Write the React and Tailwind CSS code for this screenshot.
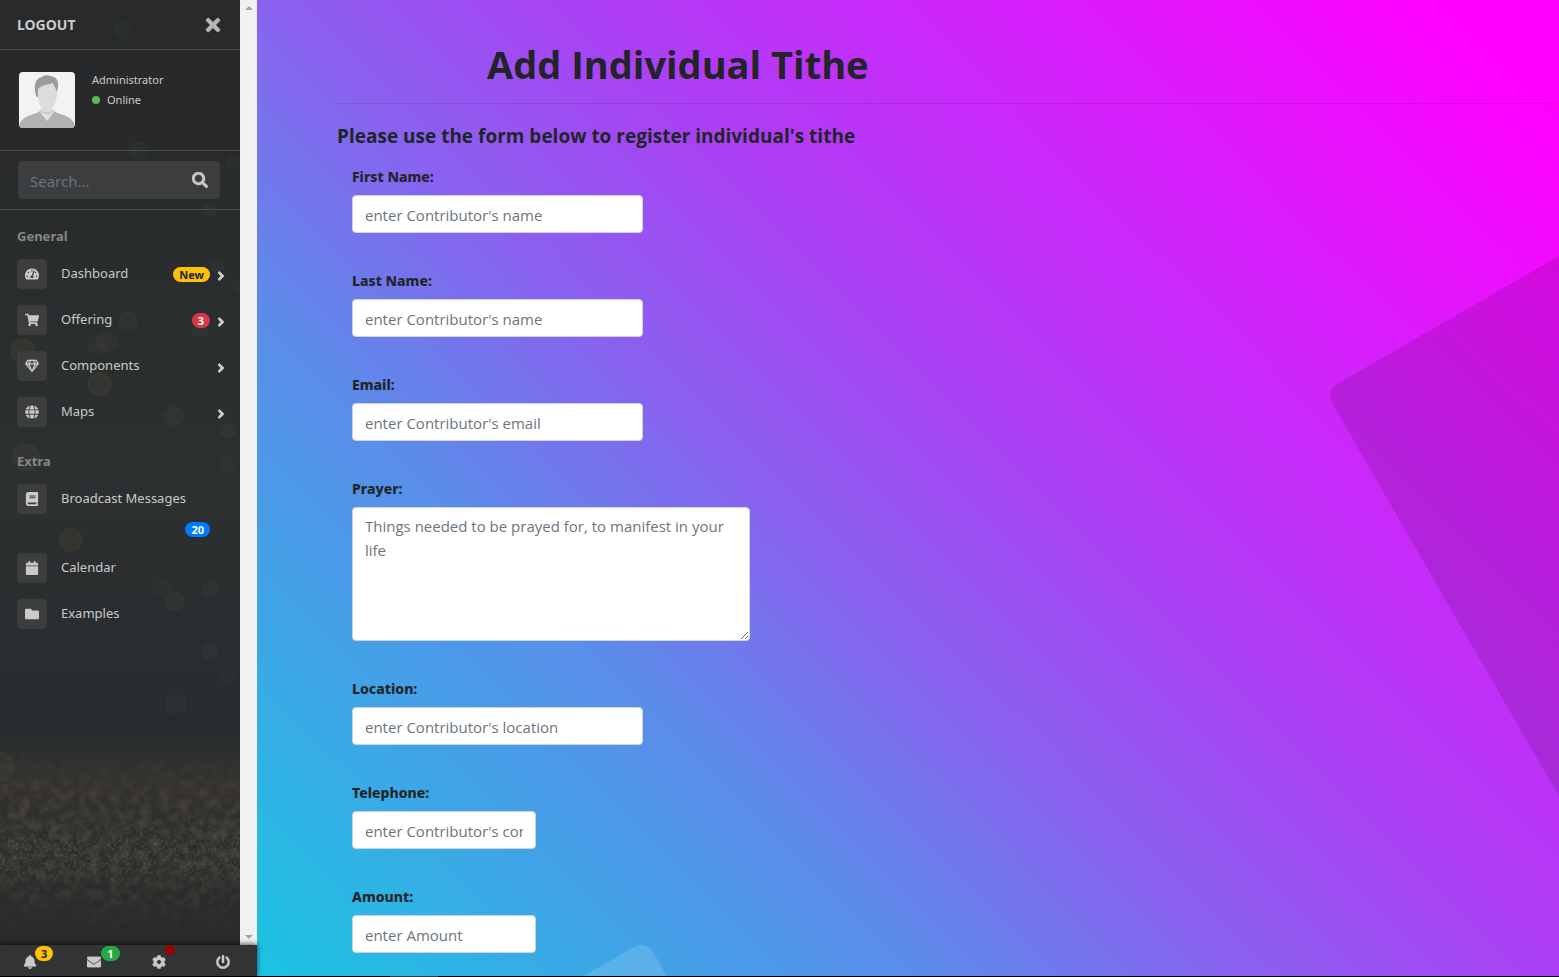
import {
  FaTachometerAlt, FaShoppingCart, FaRegGem, FaGlobe, FaBook, FaCalendar, FaFolder,
  FaBell, FaEnvelope, FaCog, FaPowerOff, FaTimes, FaSearch, FaAngleRight,
} from "react-icons/fa";

const general = [
  { label: "Dashboard", icon: FaTachometerAlt, badge: "New", tone: "bg-[#ffc107] text-[#212529]" },
  { label: "Offering", icon: FaShoppingCart, badge: "3", tone: "bg-[#dc3545] text-white" },
  { label: "Components", icon: FaRegGem, bold: true },
  { label: "Maps", icon: FaGlobe },
];

const bokeh = [
  [122, 30, 8, "#4a6a68"], [139, 151, 8, "#4f7a70"], [233, 163, 6, "#5a7468"], [210, 210, 6, "#5f7a70"],
  [23, 351, 12, "#a08a50"], [107, 342, 10, "#77704a"], [97, 345, 9, "#6a6a48"], [99, 384, 11, "#a08a45"],
  [128, 321, 9, "#6f7050"], [200, 330, 7, "#557060"], [217, 267, 6, "#5a6a60"], [238, 286, 5, "#5a7a74"],
  [174, 416, 9, "#7d7450"], [228, 431, 7, "#74785c"], [26, 457, 13, "#8a8450"], [228, 465, 7, "#55605a"],
  [71, 540, 11, "#a06f35"], [175, 601, 9, "#7a7a4c"], [210, 590, 8, "#55605a"], [162, 588, 9, "#4f5c58"],
  [210, 651, 8, "#60705c"], [227, 675, 8, "#45585c"], [176, 704, 9, "#6a8070"], [0, 767, 14, "#8a8a50"],
];

function SidebarBackdrop() {
  return (
    <svg className="absolute inset-0 h-full w-full" viewBox="0 0 240 945" preserveAspectRatio="xMidYMax slice" aria-hidden="true">
      <defs>
        <linearGradient id="night" x1="0" y1="0" x2="0" y2="1">
          <stop offset="0" stopColor="#292a2b" />
          <stop offset="0.12" stopColor="#27292a" />
          <stop offset="0.3" stopColor="#2a2d2e" />
          <stop offset="0.5" stopColor="#2c3030" />
          <stop offset="0.77" stopColor="#282c2f" />
          <stop offset="0.83" stopColor="#34322e" />
          <stop offset="0.88" stopColor="#2d2d2b" />
          <stop offset="1" stopColor="#292a2b" />
        </linearGradient>
        <linearGradient id="fade" x1="0" y1="0" x2="0" y2="1">
          <stop offset="0" stopColor="#fff" stopOpacity="0" />
          <stop offset="0.4" stopColor="#fff" stopOpacity="0.22" />
          <stop offset="0.7" stopColor="#fff" stopOpacity="0.2" />
          <stop offset="1" stopColor="#fff" stopOpacity="0" />
        </linearGradient>
        <mask id="band" maskContentUnits="objectBoundingBox"><rect width="1" height="1" fill="url(#fade)" /></mask>
        <filter id="coarse" x="0" y="0" width="100%" height="100%">
          <feTurbulence type="fractalNoise" baseFrequency="0.1" numOctaves="3" seed="4" />
          <feColorMatrix values="0 0 0 0 0.36  0 0 0 0 0.3  0 0 0 0 0.18  2 0 0 0 -0.7" />
        </filter>
        <filter id="fine" x="0" y="0" width="100%" height="100%">
          <feTurbulence type="fractalNoise" baseFrequency="0.35" numOctaves="2" seed="9" />
          <feColorMatrix values="0 0 0 0 0.38  0 0 0 0 0.4  0 0 0 0 0.35  2.4 0 0 0 -1.05" />
        </filter>
      </defs>
      <rect width="240" height="945" fill="url(#night)" />
      {bokeh.map(([x, y, r, c], i) => (
        <circle key={i} cx={x} cy={y} r={r} fill={c} fillOpacity="0.08" stroke={c} strokeOpacity="0.07" strokeWidth="2" />
      ))}
      <g mask="url(#band)"><rect y="745" width="240" height="190" filter="url(#coarse)" /></g>
      <g mask="url(#band)"><rect y="815" width="240" height="75" filter="url(#fine)" /></g>
    </svg>
  );
}

function Avatar() {
  return (
    <svg className="h-14 w-14 rounded" viewBox="0 0 56 56" role="img" aria-label="User picture">
      <rect width="56" height="56" fill="#f3f3f3" />
      <path d="M0 56C0 49 5 45 12 43c6-2 9-3 10-6h12c1 3 5 4 10 6 7 2 12 6 12 13z" fill="#b1b1b1" />
      <path d="M22 37h12l1 3-7 9-7-9z" fill="#e2e2e2" />
      <path d="M22 38q6 4 12 0l-1 3q-5 2-10 0z" fill="#c9c9c9" />
      <path d="M17 24C14 12 17 6 23 5c2-2 6-2 8-1 6 0 9 5 8 11l-2 10H18z" fill="#9b9b9b" />
      <path d="M19 17c3-4 9-4 15-6 1 3 3 6 4 9 0 8-3 19-10 19S18 28 19 17z" fill="#dcdcdc" />
    </svg>
  );
}

function Badge({ tone, children }) {
  return <span className={`rounded-full px-1.5 text-[11px] leading-[15px] font-bold ${tone}`}>{children}</span>;
}

function MenuItem({ item }) {
  const Icon = item.icon;
  return (
    <li>
      <a href="#" className="flex items-center py-2 pr-3 pl-[17px]">
        <span className="mr-3.5 flex h-[30px] w-[30px] items-center justify-center rounded bg-[#3c3d3e] text-[14px]">
          <Icon stroke="currentColor" strokeWidth={item.bold ? 10 : 0} />
        </span>
        <span className="flex-1">{item.label}</span>
        {item.badge && <Badge tone={item.tone}>{item.badge}</Badge>}
        {item.plain ? null : <FaAngleRight className="mt-1 ml-1 h-3.5 w-3.5" stroke="currentColor" strokeWidth="30" />}
      </a>
    </li>
  );
}

function FooterLink({ icon: Icon, label, children }) {
  return (
    <a href="#" aria-label={label} className="relative flex flex-1 justify-center pt-2.5 pr-1">
      <Icon className="h-3.5 w-3.5" stroke="currentColor" strokeWidth="12" />
      {children}
    </a>
  );
}

function Sidebar() {
  return (
    <aside className="relative z-10 flex w-[257px] shrink-0 flex-col font-['Noto_Sans','Open_Sans',sans-serif] text-[13px] text-[#cacaca]">
      <div className="flex min-h-0 flex-1">
        <div className="relative w-60 overflow-hidden bg-[#292b2c]">
          <SidebarBackdrop />
          <div className="relative">
            <div className="flex h-[50px] items-center justify-between border-b border-[#4b4d4e] pr-[19px] pl-[17px]">
              <a href="#" className="text-[14px] font-bold">LOGOUT</a>
              <button type="button" aria-label="Close menu" className="text-[#b8b8b8]">
                <FaTimes className="h-5 w-4" stroke="currentColor" strokeWidth="20" />
              </button>
            </div>
            <div className="flex h-[101px] gap-[17px] border-b border-[#4b4d4e] pt-[22px] pl-[19px]">
              <Avatar />
              <div className="flex flex-col text-[11px] leading-4">
                <span>Administrator</span>
                <span className="mt-1 flex items-center gap-[7px]">
                  <span className="h-2 w-2 rounded-full bg-[#5cb85c]" />Online
                </span>
              </div>
            </div>
            <form className="border-b border-[#4b4d4e] px-[18px] py-2.5" onSubmit={(e) => e.preventDefault()}>
              <div className="flex h-[38px] w-[202px] items-center rounded bg-[#3c3d3e] px-3">
                <input type="search" aria-label="Search" placeholder="Search..." className="min-w-0 flex-1 bg-transparent pt-0.5 text-[15px] outline-none placeholder:text-[#6c757d]" />
                <button type="submit" aria-label="Submit search"><FaSearch className="h-4 w-4" stroke="currentColor" strokeWidth="16" /></button>
              </div>
            </form>
            <nav aria-label="Sidebar">
              <h2 className="px-[17px] pt-4 pb-1 leading-[21px] font-bold text-[#868787]">General</h2>
              <ul>{general.map((item) => <MenuItem key={item.label} item={item} />)}</ul>
              <h2 className="px-[17px] pt-4 pb-1 leading-[21px] font-bold text-[#868787]">Extra</h2>
              <ul>
                <li>
                  <a href="#" className="flex h-[69px] flex-wrap items-start py-2 pr-[30px] pl-[17px]">
                    <span className="mr-3.5 flex h-[30px] w-[30px] items-center justify-center rounded bg-[#3c3d3e] text-[14px]"><FaBook /></span>
                    <span className="flex-1 pt-[5px] whitespace-nowrap">Broadcast Messages</span>
                    <span className="flex w-full justify-end pt-2"><Badge tone="bg-[#007bff] text-white">20</Badge></span>
                  </a>
                </li>
                <MenuItem item={{ label: "Calendar", icon: FaCalendar, plain: true }} />
                <MenuItem item={{ label: "Examples", icon: FaFolder, plain: true }} />
              </ul>
            </nav>
          </div>
        </div>
        <div className="flex w-[17px] flex-col items-center justify-between bg-[#f1f1f1] py-1.5" aria-hidden="true">
          <svg className="h-1 w-2" viewBox="0 0 8 4"><path d="M0 4 4 0l4 4z" fill="#a3a3a3" /></svg>
          <svg className="h-1 w-2" viewBox="0 0 8 4"><path d="M0 0h8L4 4z" fill="#a3a3a3" /></svg>
        </div>
      </div>
      <div className="relative flex h-[31px] bg-[#323334] shadow-[0_-1px_5px_#000000aa]">
        <FooterLink icon={FaBell} label="Notifications">
          <span className="absolute top-px left-[35px] flex"><Badge tone="bg-[#ffc107] text-[#212529]">3</Badge></span>
        </FooterLink>
        <FooterLink icon={FaEnvelope} label="Messages">
          <span className="absolute top-px left-[37px] flex"><Badge tone="bg-[#28a745] text-white">1</Badge></span>
        </FooterLink>
        <FooterLink icon={FaCog} label="Settings">
          <span className="absolute top-0 left-9 h-2.5 w-2.5 rounded-full bg-[#990000]" />
        </FooterLink>
        <FooterLink icon={FaPowerOff} label="Power" />
      </div>
    </aside>
  );
}

const fields = [
  { id: "first", label: "First Name:", hint: "enter Contributor's name", width: "w-[291px]" },
  { id: "last", label: "Last Name:", hint: "enter Contributor's name", width: "w-[291px]" },
  { id: "email", label: "Email:", hint: "enter Contributor's email", width: "w-[291px]", type: "email" },
  { id: "prayer", label: "Prayer:", hint: "Things needed to be prayed for, to manifest in your life", width: "w-[398px]", area: true },
  { id: "location", label: "Location:", hint: "enter Contributor's location", width: "w-[291px]" },
  { id: "phone", label: "Telephone:", hint: "enter Contributor's contact", width: "w-[184px]", type: "tel" },
  { id: "amount", label: "Amount:", hint: "enter Amount", width: "w-[184px]" },
];

function Field({ field }) {
  const box = "block max-w-full rounded border border-[#ced4da] bg-white px-3 text-[15px] leading-6 text-[#495057] placeholder:text-[#6c757d]";
  return (
    <div className="flex flex-col gap-2">
      <label htmlFor={field.id} className="font-['Noto_Sans','Open_Sans',sans-serif] text-[14px] leading-5 font-extrabold">{field.label}</label>
      {field.area ? (
        <textarea id={field.id} placeholder={field.hint} className={`${box} ${field.width} h-[134px] resize py-1.5`} />
      ) : (
        <input id={field.id} type={field.type || "text"} placeholder={field.hint} className={`${box} ${field.width} h-[38px] pt-0.5`} />
      )}
    </div>
  );
}

export default function App() {
  return (
    <div className="flex h-screen flex-col bg-black font-['Open_Sans','Noto_Sans',sans-serif] text-[#212529]">
      <div className="flex min-h-0 flex-1">
        <Sidebar />
        <main className="relative min-w-0 flex-1 overflow-hidden bg-[linear-gradient(45deg,#1bc4e2_0%,#5a8de9_29%,#8962ef_43%,#ab40f4_57%,#cb28fa_71%,#ff00ff_95%)]">
          <svg className="absolute inset-0 h-full w-full" viewBox="0 0 1302 976" preserveAspectRatio="xMaxYMax slice" aria-hidden="true">
            <rect width="900" height="900" rx="14" transform="translate(1068 391) rotate(-30)" fill="#000" fillOpacity="0.12" />
            <rect x="-400" width="400" height="400" rx="14" transform="translate(389 940) rotate(-30)" fill="#fff" fillOpacity="0.14" />
          </svg>
          <div className="relative pl-20">
            <h1 className="pt-10 pb-[15px] pl-[150px] text-[38px] leading-[48px] font-bold">Add Individual Tithe</h1>
            <hr className="border-black/10" />
            <h2 className="pt-5 text-[19px] leading-6 font-bold">Please use the form below to register individual's tithe</h2>
            <form className="flex flex-col gap-[38px] pt-[19px] pl-[15px]">
              {fields.map((field) => <Field key={field.id} field={field} />)}
            </form>
          </div>
        </main>
      </div>
      <div className="flex h-px bg-black pl-[390px]"><span className="w-12 bg-[#3a3a3a]" /></div>
    </div>
  );
}
